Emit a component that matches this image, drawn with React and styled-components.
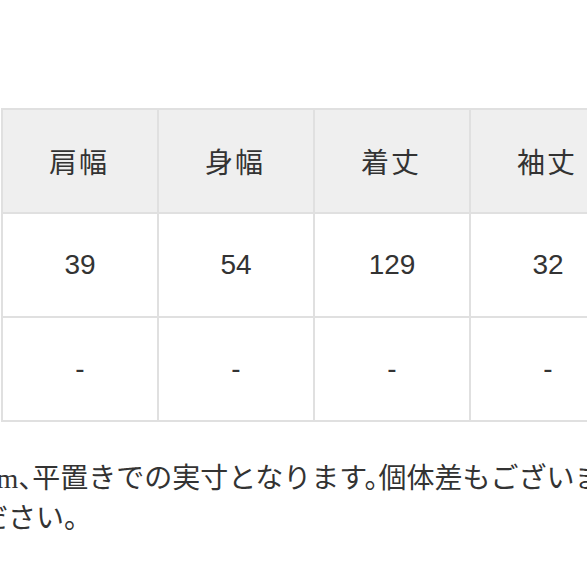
import styled, { createGlobalStyle } from 'styled-components';

const GlobalStyle = createGlobalStyle`
  html, body {
    margin: 0;
    padding: 0;
    background: #ffffff;
    overflow: hidden;
  }
`;

const headers = ['肩幅', '身幅', '着丈', '袖丈'];
const rows = [
  ['39', '54', '129', '32'],
  ['-', '-', '-', '-'],
];

const App = () => (
  <Page>
    <GlobalStyle />
    <SizeTable>
      {headers.map(h => (
        <HeadCell key={h}>{h}</HeadCell>
      ))}
      {rows.map((row, i) =>
        row.map((value, j) => <Cell key={`${i}-${j}`}>{value}</Cell>)
      )}
    </SizeTable>
    <Note>
      cm、平置きでの実寸となります。個体差もございます。ご了承
      <br />
      ださい。
    </Note>
  </Page>
);

export default App;

const Page = styled.div`
  padding-top: 108px;
  width: 700px;
`;

const SizeTable = styled.div`
  display: grid;
  grid-template-columns: repeat(4, 156px);
  grid-auto-rows: 104px;
  margin-left: 1px;
  border-top: 2px solid #e0e0e0;
  border-left: 2px solid #e0e0e0;
  width: max-content;
`;

const Cell = styled.div`
  box-sizing: border-box;
  display: flex;
  align-items: center;
  justify-content: center;
  border-right: 2px solid #e0e0e0;
  border-bottom: 2px solid #e0e0e0;
  background: #ffffff;
  color: #333333;
  font-family: 'Liberation Sans', 'Noto Sans CJK JP', sans-serif;
  font-size: 28px;
`;

const HeadCell = styled(Cell)`
  background: #efefef;
  letter-spacing: 2px;
  padding-right: 2px;
`;

const Note = styled.p`
  margin: 37px 0 0 -20px;
  text-indent: 4px;
  color: #333333;
  font-family: 'Liberation Serif', 'Noto Sans CJK JP', serif;
  font-size: 28px;
  line-height: 40px;
  white-space: nowrap;
  font-feature-settings: 'halt';
`;
